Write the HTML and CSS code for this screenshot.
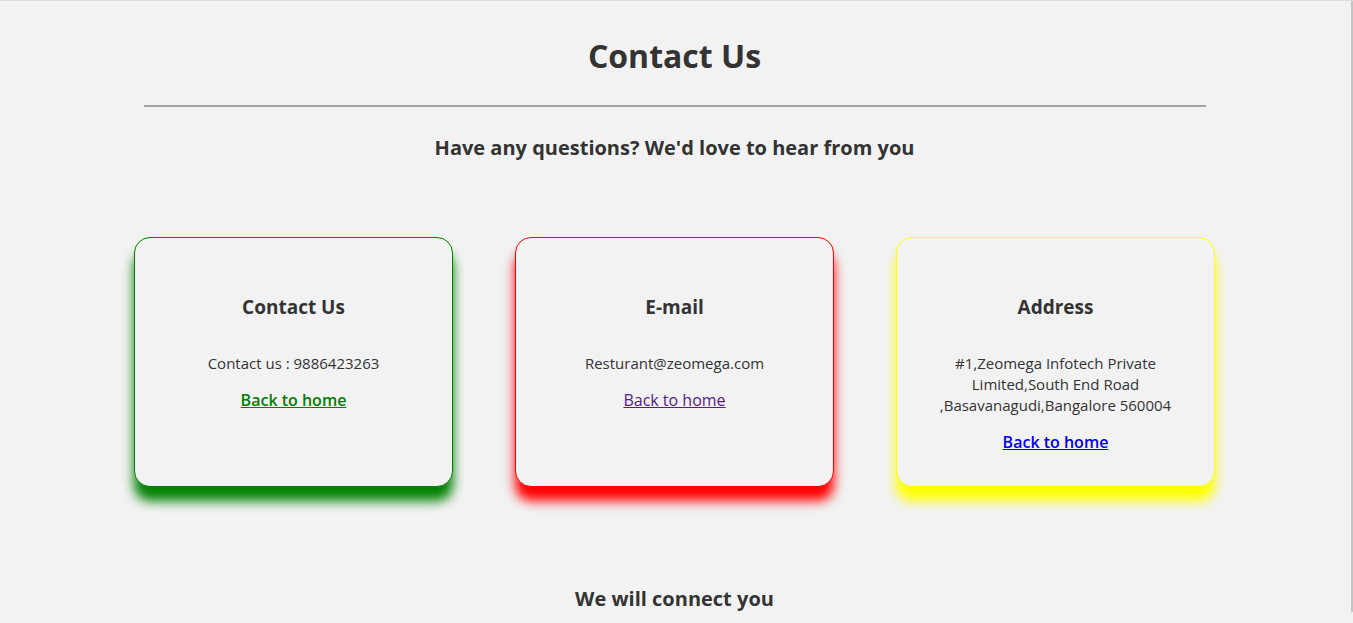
FILE: index.html
```html
<!DOCTYPE html>
<html lang="en">
<head>
<meta charset="utf-8">
<title>Contact Us</title>
<link rel="stylesheet" href="styles.css">
</head>
<body>
<div class="page">
  <header class="intro">
    <h1 class="title">Contact Us</h1>
    <hr class="rule">
    <h2 class="subtitle">Have any questions? We'd love to hear from you</h2>
  </header>
  <section class="cards">
    <div class="card card-green">
      <h3 class="card-title">Contact Us</h3>
      <p class="card-text">Contact us : 9886423263</p>
      <a class="card-link link-green" href="#">Back to home</a>
    </div>
    <div class="card card-red">
      <h3 class="card-title">E-mail</h3>
      <p class="card-text">Resturant@zeomega.com</p>
      <a class="card-link link-purple" href="#">Back to home</a>
    </div>
    <div class="card card-yellow">
      <h3 class="card-title">Address</h3>
      <p class="card-text">#1,Zeomega Infotech Private<br>Limited,South End Road<br>,Basavanagudi,Bangalore 560004</p>
      <a class="card-link link-blue" href="#">Back to home</a>
    </div>
  </section>
  <h2 class="connect">We will connect you</h2>
</div>
</body>
</html>
```

FILE: styles.css
```css
html, body {
  margin: 0;
  padding: 0;
  background: #f2f2f2;
}
body {
  font-family: "Comic Sans MS", "Open Sans", sans-serif;
  color: #333333;
  border-top: 1px solid #dcdcdc;
}
.page {
  border-right: 2px solid #c4c4c4;
  padding-right: 2px;
}
.intro {
  display: flex;
  flex-direction: column;
  align-items: center;
}
.title {
  margin: 34px 0 0;
  font-size: 32px;
  line-height: 42px;
  font-weight: 700;
}
.rule {
  width: 1062px;
  margin: 28px 0 0;
  border: 0;
  border-top: 2px solid #a0a0a0;
  height: 0;
}
.subtitle {
  margin: 28px 0 0;
  font-size: 20px;
  line-height: 26px;
  font-weight: 700;
}
.cards {
  display: flex;
  justify-content: center;
  gap: 62px;
  margin-top: 76px;
}
.card {
  box-sizing: border-box;
  width: 319px;
  height: 250px;
  border-radius: 16px;
  background: #f2f2f2;
  padding: 56px 20px 0;
  display: flex;
  flex-direction: column;
  align-items: center;
  text-align: center;
}
.card-green { border: 1px solid #008000; box-shadow: 0 14px 12px #008000; }
.card-red { border: 1px solid #ff0000; box-shadow: 0 14px 12px #ff0000; }
.card-yellow { border: 1px solid #ffff00; box-shadow: 0 14px 12px #ffff00; }
.card-title {
  margin: 0;
  font-size: 19px;
  line-height: 26px;
  font-weight: 700;
}
.card-text {
  margin: 33px 0 0;
  font-size: 15px;
  line-height: 21px;
}
.card-link {
  margin-top: 16px;
  font-size: 16px;
  line-height: 21px;
}
.link-green { color: #008000; font-weight: 600; }
.link-purple { color: #551a8b; }
.link-blue { color: #0000ee; font-weight: 600; }
.connect {
  margin: 99px 0 0;
  text-align: center;
  font-size: 20px;
  line-height: 26px;
  font-weight: 700;
}
```
